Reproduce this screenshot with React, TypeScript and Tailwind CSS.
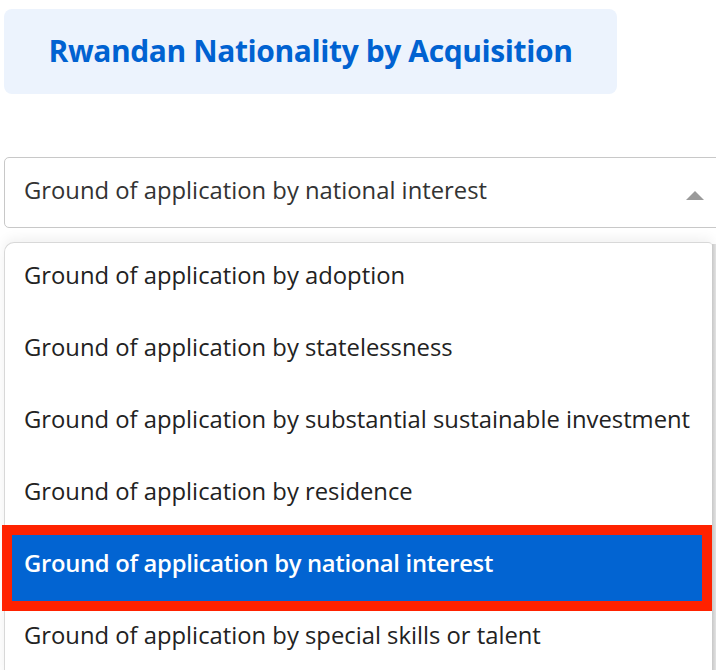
import React from "react";

const options = [
  "Ground of application by adoption",
  "Ground of application by statelessness",
  "Ground of application by substantial sustainable investment",
  "Ground of application by residence",
  "Ground of application by national interest",
  "Ground of application by special skills or talent",
];

export default function App() {
  return (
    <div
      className="relative w-[716px] h-[670px] overflow-hidden bg-white"
      style={{ fontFamily: "'Open Sans', 'Noto Sans', sans-serif" }}
    >
      <div className="pl-[4px] pt-[9px]">
        <div className="w-[613px] h-[85px] rounded-[8px] bg-[#ecf3fd] flex items-center justify-center pb-[2px]">
          <span className="text-[30px] font-bold text-[#0062d1] tracking-[-0.4px]">Rwandan Nationality by Acquisition</span>
        </div>
      </div>

      <div className="ml-[4px] mt-[63px] w-[740px] h-[71px] rounded-[5px] border border-[#c8c8c8] flex items-center pl-[19px] pb-[4px] relative">
        <span className="text-[23.8px] text-[#333333]">Ground of application by national interest</span>
        <svg className="absolute left-[681px] top-[33px]" width="18" height="9" viewBox="0 0 18 9">
          <polygon points="0,9 9,0 18,9" fill="#9a9a9a" />
        </svg>
      </div>

      <div className="relative mt-[14px] flex">
        <div className="ml-[4px] w-[708px] h-[440px] bg-white border-l border-t border-[#d8d8d8] rounded-tl-[10px] rounded-tr-[4px] shadow-[0_-4px_12px_rgba(0,0,0,0.06)] overflow-hidden">
          {options.map((o, i) => (
            <div
              key={o}
              className={
                i === 4
                  ? "h-[72px] flex items-center pl-[19px] pb-[6px] bg-[#0264d2] text-white font-semibold tracking-[-0.3px] text-[23.8px]"
                  : "h-[72px] flex items-center pl-[19px] pb-[6px] text-[#222222] text-[23.8px]"
              }
            >
              {o}
            </div>
          ))}
        </div>
        <div className="w-[4px] mt-[2px] h-[440px] bg-gradient-to-r from-[#c8c8c8] to-[#e2e2e2]" />
      </div>

      <div className="absolute left-[2px] top-[525px] w-[710px] h-[86px] border-[10px] border-[#ff2200] pointer-events-none" />
    </div>
  );
}
